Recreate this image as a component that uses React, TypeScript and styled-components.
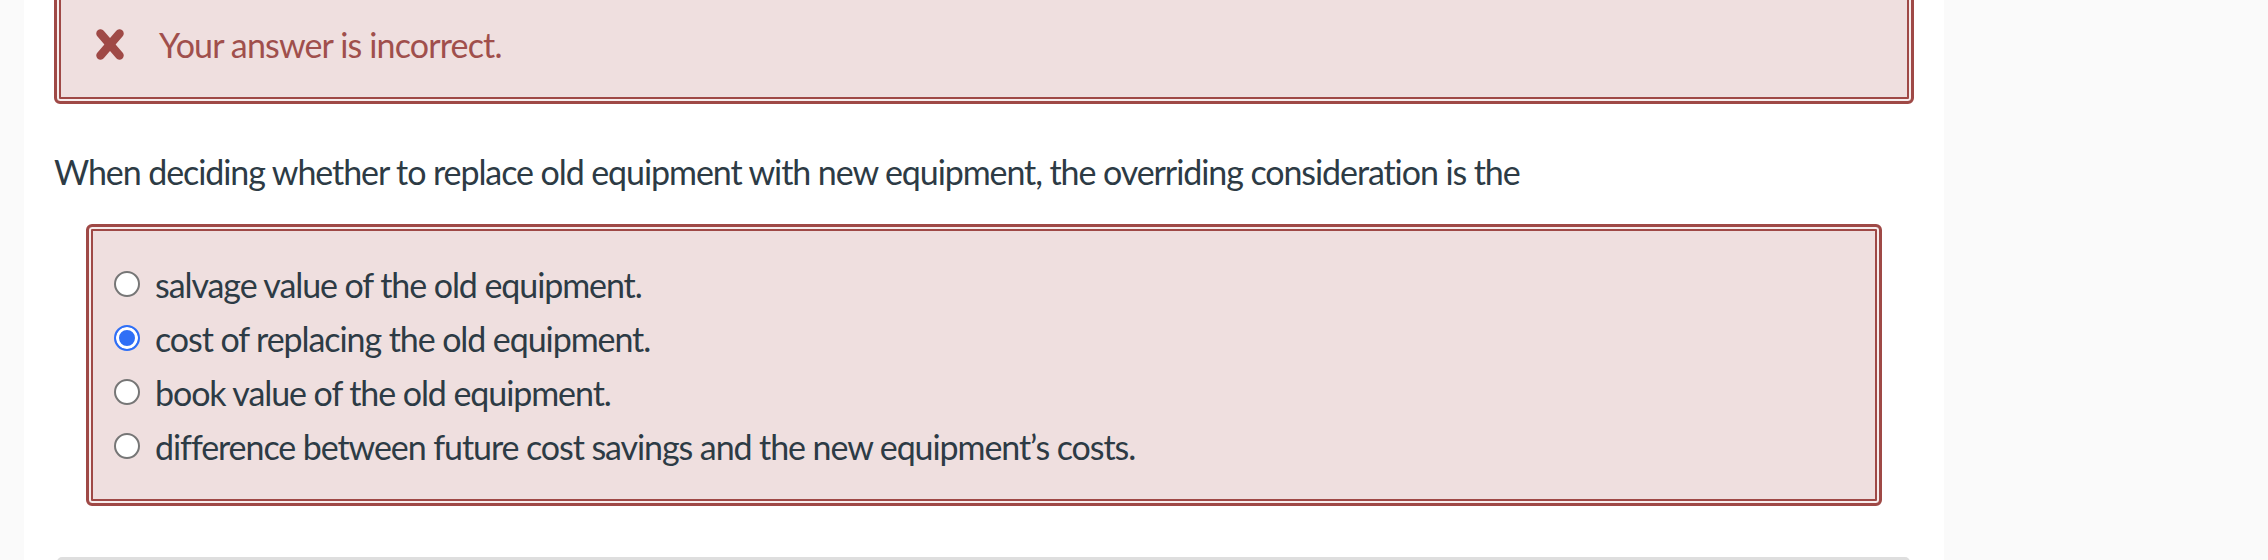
import React from 'react';
import styled, { createGlobalStyle } from 'styled-components';

const GlobalStyle = createGlobalStyle`
  html, body, #root {
    margin: 0;
    height: 100%;
    overflow: hidden;
  }
  body {
    background: #fff;
    font-family: Lato, 'Open Sans', sans-serif;
  }
`;

const red = '#9f4946';

const Page = styled.div`
  display: flex;
  height: 100%;
`;

const SideGutter = styled.div<{ $width?: number }>`
  flex: ${(p) => (p.$width ? `0 0 ${p.$width}px` : '1 1 auto')};
  background: #fafafa;
`;

const Main = styled.main`
  flex: 0 0 1920px;
  background: #fff;
  padding: 0 30px;
  box-sizing: border-box;
`;

const Alert = styled.div`
  display: flex;
  align-items: center;
  gap: 35px;
  height: 120px;
  margin-top: -16px;
  padding: 0 38px 0 39px;
  box-sizing: border-box;
  background: #efdfdf;
  border: 3px solid ${red};
  border-radius: 6px;
  box-shadow: inset 0 0 0 2px #f7eded, inset 0 0 0 4px ${red};
  color: #a04f4c;
  font-size: 34px;
  letter-spacing: -0.85px;
`;

const Question = styled.p`
  margin: 42px 0 0;
  font-size: 34px;
  line-height: 51px;
  letter-spacing: -1.08px;
  color: #2d3b45;
`;

const Answers = styled.div`
  margin: 27px 32px 0;
  padding: 30px 0 30px 25px;
  background: #efdfdf;
  border: 3px solid ${red};
  border-radius: 6px;
  box-shadow: inset 0 0 0 2px #f7eded, inset 0 0 0 4px ${red};
`;

const Row = styled.label`
  display: flex;
  align-items: center;
  gap: 15px;
  height: 54px;
  font-size: 34px;
  letter-spacing: -1.08px;
  color: #2d3b45;
`;

const Radio = styled.span<{ $checked?: boolean }>`
  flex: 0 0 auto;
  width: 26px;
  height: 26px;
  border-radius: 50%;
  box-sizing: border-box;
  border: ${(p) => (p.$checked ? '2px solid #2f6ff6' : '2px solid #767676')};
  background: ${(p) => (p.$checked ? '#2f6ff6' : '#fff')};
  box-shadow: ${(p) => (p.$checked ? 'inset 0 0 0 3px #fff' : 'none')};
`;

const NextBar = styled.div`
  margin: 51px 4px 0 3px;
  height: 10px;
  border-radius: 5px;
  background: #dedede;
`;

const CrossIcon = () => (
  <svg width="28" height="31" viewBox="0 0 28 31">
    <g stroke={red} strokeWidth="8.5" strokeLinecap="round">
      <line x1="4.5" y1="4.5" x2="23.5" y2="26.5" />
      <line x1="23.5" y1="4.5" x2="4.5" y2="26.5" />
    </g>
  </svg>
);

const options = [
  { id: 'a', text: 'salvage value of the old equipment.' },
  { id: 'b', text: 'cost of replacing the old equipment.', checked: true },
  { id: 'c', text: 'book value of the old equipment.' },
  { id: 'd', text: 'difference between future cost savings and the new equipment\u2019s costs.' },
];

const App = () => (
  <>
    <GlobalStyle />
    <Page>
      <SideGutter $width={24} />
      <Main>
        <Alert>
          <CrossIcon />
          <span>Your answer is incorrect.</span>
        </Alert>
        <Question>
          When deciding whether to replace old equipment with new equipment, the overriding consideration is the
        </Question>
        <Answers>
          {options.map((opt) => (
            <Row key={opt.id}>
              <Radio $checked={opt.checked} />
              {opt.text}
            </Row>
          ))}
        </Answers>
        <NextBar />
      </Main>
      <SideGutter />
    </Page>
  </>
);

export default App;
